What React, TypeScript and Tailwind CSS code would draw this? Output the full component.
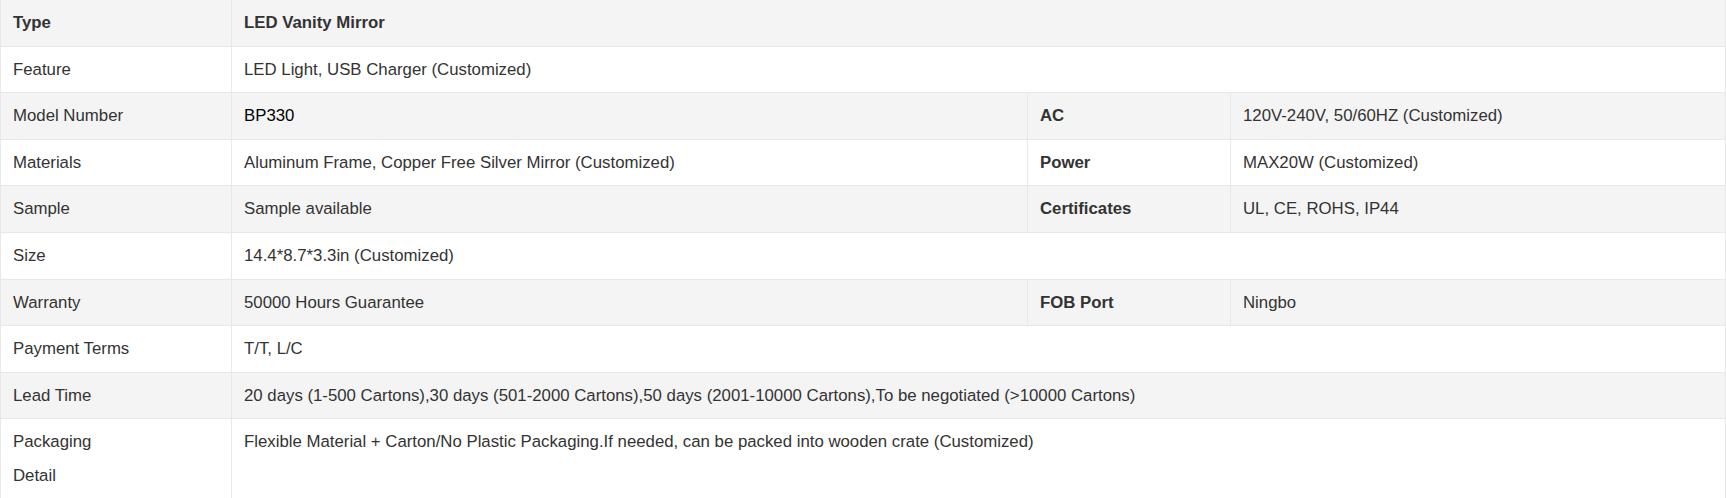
import { FC } from "react";

interface SpecRow {
  label: string;
  value: string;
  label2?: string;
  value2?: string;
  dark?: boolean;
}

const header = { label: "Type", value: "LED Vanity Mirror" };

const rows: SpecRow[] = [
  { label: "Feature", value: "LED Light, USB Charger (Customized)" },
  { label: "Model Number", value: "BP330", label2: "AC", value2: "120V-240V, 50/60HZ (Customized)", dark: true },
  { label: "Materials", value: "Aluminum Frame, Copper Free Silver Mirror (Customized)", label2: "Power", value2: "MAX20W (Customized)" },
  { label: "Sample", value: "Sample available", label2: "Certificates", value2: "UL, CE, ROHS, IP44" },
  { label: "Size", value: "14.4*8.7*3.3in (Customized)" },
  { label: "Warranty", value: "50000 Hours Guarantee", label2: "FOB Port", value2: "Ningbo" },
  { label: "Payment Terms", value: "T/T, L/C" },
  {
    label: "Lead Time",
    value:
      "20 days (1-500 Cartons),30 days (501-2000 Cartons),50 days (2001-10000 Cartons),To be negotiated (>10000 Cartons)",
  },
  {
    label: "Packaging Detail",
    value: "Flexible Material + Carton/No Plastic Packaging.If needed, can be packed into wooden crate (Customized)",
  },
];

const cell = "border border-[#e8e8e8] px-[12px] py-[6px] align-top";

const App: FC = () => {
  return (
    <div className="w-[1726px] h-[498px] overflow-hidden bg-white">
      <table
        className="w-full table-fixed border-collapse text-[16.8px] leading-[33.6px] text-[#333]"
        style={{ fontFamily: '"Liberation Sans", Arial, sans-serif' }}
      >
        <colgroup>
          <col className="w-[231px]" />
          <col className="w-[796px]" />
          <col className="w-[203px]" />
          <col />
        </colgroup>
        <tbody>
          <tr className="bg-[#f4f4f4] font-bold">
            <td className={`${cell} border-t-0`}>{header.label}</td>
            <td className={`${cell} border-t-0`} colSpan={3}>
              {header.value}
            </td>
          </tr>
          {rows.map((row, i) => (
            <tr key={row.label} className={i % 2 === 0 ? "bg-white" : "bg-[#f4f4f4]"}>
              <td className={cell}>
                {row.label === "Packaging Detail" ? (
                  <>
                    Packaging
                    <br />
                    Detail
                  </>
                ) : (
                  row.label
                )}
              </td>
              {row.label2 ? (
                <>
                  <td className={`${cell} ${row.dark ? "text-black" : ""}`}>{row.value}</td>
                  <td className={`${cell} font-bold`}>{row.label2}</td>
                  <td className={cell}>{row.value2}</td>
                </>
              ) : (
                <td className={cell} colSpan={3}>
                  {row.value}
                </td>
              )}
            </tr>
          ))}
        </tbody>
      </table>
    </div>
  );
};

export default App;
